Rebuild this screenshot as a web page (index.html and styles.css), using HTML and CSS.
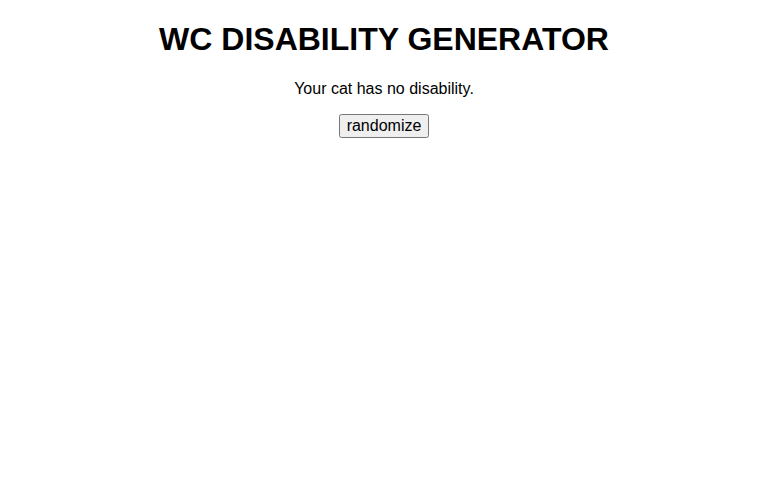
FILE: index.html
```html
<!DOCTYPE html>
<html lang="en">
<head>
    <meta charset="UTF-8">
    <meta name="viewport" content="width=device-width, initial-scale=1.0">
    <title>WC Disability Generator</title>
    <link rel="stylesheet" href="styles.css">
</head>
<body>
    <h1>WC DISABILITY GENERATOR</h1>
    <p id="result">Your cat has no disability.</p>
    <button id="randomize">randomize</button>
</body>
</html>
```

FILE: styles.css
```css
body {
    margin: 0;
    font-family: "Liberation Sans", Arial, sans-serif;
    text-align: center;
    background: white;
    color: black;
}
h1 {
    font-size: 32px;
    margin: 21.44px 0;
}
p {
    font-size: 16px;
    margin: 16px 0;
}
button {
    font-family: "Liberation Sans", Arial, sans-serif;
    font-size: 16px;
    padding: 1px 6px;
}
```
